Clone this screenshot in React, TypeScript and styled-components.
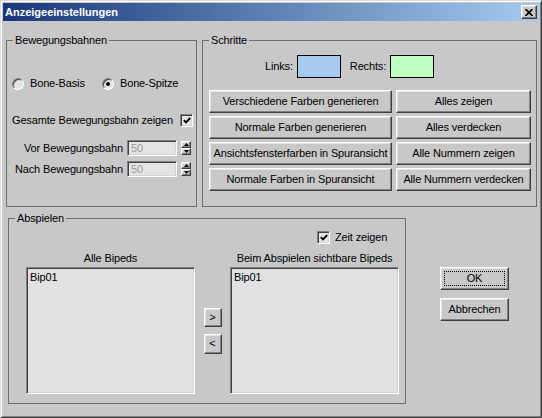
import React from "react";
import styled, { createGlobalStyle, css } from "styled-components";

const Global = createGlobalStyle`
  html, body { margin: 0; padding: 0; background: #c8c8c8; }
  body { font-family: "Liberation Sans", Arial, sans-serif; font-size: 11px; letter-spacing: -0.15px; color: #000; }
  * { box-sizing: border-box; }
`;

const raised = css`
  border: 1px solid;
  border-color: #ffffff #404040 #404040 #ffffff;
  box-shadow: inset -1px -1px #808080, inset 1px 1px #e4e4e4;
`;

const sunken = css`
  border: 1px solid;
  border-color: #808080 #ffffff #ffffff #808080;
  box-shadow: inset 1px 1px #404040, inset -1px -1px #d4d4d4;
`;

const Window = styled.div`
  width: 542px;
  height: 418px;
  background: #c8c8c8;
  border: 1px solid;
  border-color: #dcdcdc #404040 #404040 #dcdcdc;
  box-shadow: inset 1px 1px #ffffff, inset -1px -1px #808080;
  padding: 2px;
  display: flex;
  flex-direction: column;
`;

const TitleBar = styled.div`
  height: 18px;
  flex: none;
  display: flex;
  align-items: center;
  justify-content: space-between;
  padding: 0 2px 0 2px;
  background: linear-gradient(to right, #1a3679, #a6caf0);
`;

const TitleText = styled.span`
  color: #fff;
  font-weight: bold;
  font-size: 11px;
  letter-spacing: 0;
  line-height: 13px;
`;

const CloseButton = styled.div`
  width: 16px;
  height: 14px;
  background: #c8c8c8;
  ${raised};
  display: flex;
  align-items: center;
  justify-content: center;
`;

const Body = styled.div`
  display: flex;
  flex-direction: column;
  padding: 0 2px 0 3px;
`;

const TopRow = styled.div`
  display: flex;
  gap: 5px;
  margin-top: 13px;
`;

const Group = styled.fieldset<{ $w: number; $h: number }>`
  margin: 0;
  padding: 0;
  min-width: 0;
  width: ${(p) => p.$w}px;
  height: ${(p) => p.$h}px;
  border: 1px solid #6e6e6e;
  display: flex;
  flex-direction: column;
`;

const Legend = styled.legend`
  margin-left: 6px;
  padding: 0 2px;
  font-size: 11px;
  line-height: 13px;
`;

const RadioRow = styled.div`
  display: flex;
  align-items: center;
  height: 13px;
  margin-top: 30px;
  padding-left: 5px;
`;

const RadioLabel = styled.label<{ $w?: number }>`
  display: flex;
  align-items: center;
  gap: 6px;
  line-height: 13px;
  ${(p) => (p.$w ? `width: ${p.$w}px;` : "")}
`;

const RadioCircle = styled.span<{ $on?: boolean }>`
  width: 12px;
  height: 12px;
  border-radius: 50%;
  border: 1px solid;
  border-color: #808080 #ffffff #ffffff #808080;
  box-shadow: inset 1px 1px #404040;
  background: #e4e4e4;
  display: flex;
  align-items: center;
  justify-content: center;
  &::after {
    content: "";
    width: 4px;
    height: 4px;
    border-radius: 50%;
    background: ${(p) => (p.$on ? "#000" : "transparent")};
  }
`;

const CheckRow = styled.div<{ $mt: number }>`
  display: flex;
  align-items: center;
  justify-content: space-between;
  height: 13px;
  margin-top: ${(p) => p.$mt}px;
  padding: 0 3px 0 5px;
  line-height: 13px;
`;

const CheckBox = styled.span`
  width: 13px;
  height: 13px;
  flex: none;
  ${sunken};
  background: #e4e4e4;
  display: flex;
  align-items: center;
  justify-content: center;
`;

const SpinGrid = styled.div`
  display: grid;
  grid-template-columns: 111px 50px 11px;
  column-gap: 4px;
  grid-auto-rows: 16px;
  row-gap: 5px;
  align-items: center;
  margin-top: 13px;
  padding-left: 5px;
`;

const SpinLabel = styled.span`
  text-align: right;
  white-space: nowrap;
  line-height: 13px;
`;

const Field = styled.div`
  height: 16px;
  ${sunken};
  background: #e4e4e4;
  color: #9a9a9a;
  padding: 1px 3px;
  line-height: 13px;
`;

const Spinner = styled.div`
  width: 10px;
  height: 14px;
  display: flex;
  flex-direction: column;
`;

const SpinHalf = styled.div`
  flex: 1;
  ${raised};
  background: #c8c8c8;
  display: flex;
  align-items: center;
  justify-content: center;
`;

const SwatchRow = styled.div`
  display: flex;
  align-items: center;
  margin-top: 8px;
  padding-left: 62px;
  height: 23px;
  line-height: 13px;
`;

const Swatch = styled.span<{ $c: string; $mr?: number }>`
  width: 44px;
  height: 23px;
  border: 1px solid #000;
  background: ${(p) => p.$c};
  margin-left: 4px;
  margin-right: ${(p) => p.$mr ?? 0}px;
`;

const ButtonGrid = styled.div`
  display: grid;
  grid-template-columns: 183px 135px;
  column-gap: 4px;
  grid-auto-rows: 23px;
  row-gap: 3px;
  margin-top: 12px;
  padding-left: 6px;
`;

const Button = styled.div<{ $w?: number; $h?: number }>`
  ${raised};
  background: #c8c8c8;
  display: flex;
  align-items: center;
  justify-content: center;
  white-space: nowrap;
  line-height: 13px;
  ${(p) => (p.$w ? `width: ${p.$w}px;` : "")}
  ${(p) => (p.$h ? `height: ${p.$h}px;` : "")}
`;

const Focus = styled.span`
  border: 1px dotted #000;
  position: absolute;
  inset: 3px;
`;

const DefaultButton = styled(Button)`
  position: relative;
`;

const BottomRow = styled.div`
  display: flex;
  margin-top: 5px;
  padding-left: 2px;
`;

const ZeitRow = styled.label`
  display: flex;
  align-items: center;
  gap: 5px;
  height: 13px;
  margin-top: 6px;
  margin-left: 308px;
  line-height: 13px;
`;

const ListGrid = styled.div`
  display: grid;
  grid-template-columns: 169px 35px 169px;
  grid-template-rows: 13px 127px;
  row-gap: 2px;
  margin-top: 8px;
  padding-left: 17px;
`;

const ListTitle = styled.span<{ $col: number }>`
  grid-column: ${(p) => p.$col};
  text-align: center;
  white-space: nowrap;
  line-height: 13px;
`;

const ListBox = styled.div`
  ${sunken};
  background: #e1e1e1;
  padding: 3px 3px;
  line-height: 13px;
`;

const ArrowCol = styled.div`
  display: flex;
  flex-direction: column;
  align-items: center;
  justify-content: center;
  gap: 7px;
`;

const SideCol = styled.div`
  display: flex;
  flex-direction: column;
  gap: 8px;
  padding-top: 55px;
  margin-left: 34px;
`;

const Check = () => (
  <svg width="8" height="7" viewBox="0 0 8 7">
    <polyline points="0.8,3.2 3,5.4 7.2,1" fill="none" stroke="#000" strokeWidth="1.9" />
  </svg>
);

const Up = () => (
  <svg width="5" height="3" viewBox="0 0 5 3">
    <polygon points="2.5,0 5,3 0,3" fill="#000" />
  </svg>
);

const Down = () => (
  <svg width="5" height="3" viewBox="0 0 5 3">
    <polygon points="0,0 5,0 2.5,3" fill="#000" />
  </svg>
);

const SpinBox = ({ label }: { label: string }) => (
  <>
    <SpinLabel>{label}</SpinLabel>
    <Field>50</Field>
    <Spinner>
      <SpinHalf>
        <Up />
      </SpinHalf>
      <SpinHalf>
        <Down />
      </SpinHalf>
    </Spinner>
  </>
);

const stepButtons: [string, string][] = [
  ["Verschiedene Farben generieren", "Alles zeigen"],
  ["Normale Farben generieren", "Alles verdecken"],
  ["Ansichtsfensterfarben in Spuransicht", "Alle Nummern zeigen"],
  ["Normale Farben in Spuransicht", "Alle Nummern verdecken"],
];

export default function App() {
  return (
    <>
      <Global />
      <Window>
        <TitleBar>
          <TitleText>Anzeigeeinstellungen</TitleText>
          <CloseButton>
            <svg width="8" height="7" viewBox="0 0 8 7">
              <path d="M0.5 0 L7.5 7 M7.5 0 L0.5 7" stroke="#000" strokeWidth="1.7" />
            </svg>
          </CloseButton>
        </TitleBar>
        <Body>
          <TopRow>
            <Group $w={191} $h={173}>
              <Legend>Bewegungsbahnen</Legend>
              <RadioRow>
                <RadioLabel $w={90}>
                  <RadioCircle />
                  Bone-Basis
                </RadioLabel>
                <RadioLabel>
                  <RadioCircle $on />
                  Bone-Spitze
                </RadioLabel>
              </RadioRow>
              <CheckRow $mt={24}>
                <span>Gesamte Bewegungsbahn zeigen</span>
                <CheckBox>
                  <Check />
                </CheckBox>
              </CheckRow>
              <SpinGrid>
                <SpinBox label="Vor Bewegungsbahn" />
                <SpinBox label="Nach Bewegungsbahn" />
              </SpinGrid>
            </Group>
            <Group $w={335} $h={173}>
              <Legend>Schritte</Legend>
              <SwatchRow>
                <span>Links:</span>
                <Swatch $c="#a6caf0" $mr={9} />
                <span>Rechts:</span>
                <Swatch $c="#c0ffc0" />
              </SwatchRow>
              <ButtonGrid>
                {stepButtons.map(([a, b]) => (
                  <React.Fragment key={a}>
                    <Button>{a}</Button>
                    <Button>{b}</Button>
                  </React.Fragment>
                ))}
              </ButtonGrid>
            </Group>
          </TopRow>
          <BottomRow>
            <Group $w={398} $h={192}>
              <Legend>Abspielen</Legend>
              <ZeitRow>
                <CheckBox>
                  <Check />
                </CheckBox>
                Zeit zeigen
              </ZeitRow>
              <ListGrid>
                <ListTitle $col={1}>Alle Bipeds</ListTitle>
                <ListTitle $col={3}>Beim Abspielen sichtbare Bipeds</ListTitle>
                <ListBox>Bip01</ListBox>
                <ArrowCol>
                  <Button $w={18} $h={19}>&gt;</Button>
                  <Button $w={18} $h={20}>&lt;</Button>
                </ArrowCol>
                <ListBox>Bip01</ListBox>
              </ListGrid>
            </Group>
            <SideCol>
              <DefaultButton $w={69} $h={23}>
                OK
                <Focus />
              </DefaultButton>
              <Button $w={69} $h={23}>Abbrechen</Button>
            </SideCol>
          </BottomRow>
        </Body>
      </Window>
    </>
  );
}
